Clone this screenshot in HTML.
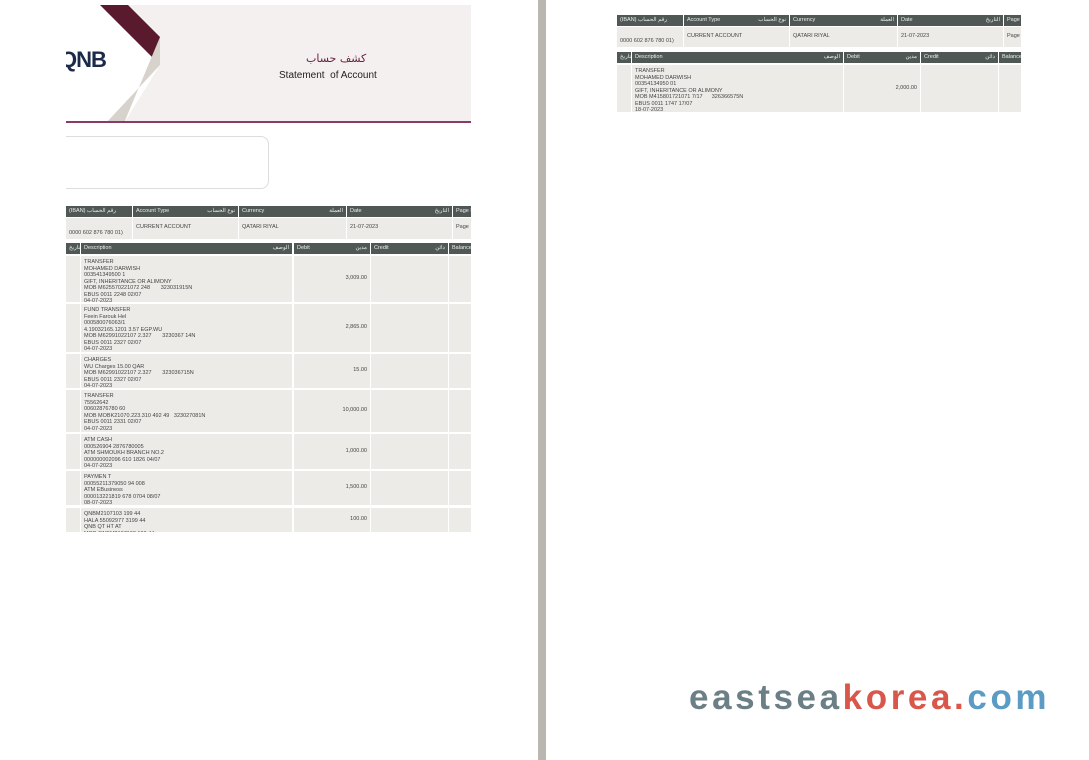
<!DOCTYPE html>
<html><head><meta charset="utf-8"><style>
*{margin:0;padding:0;box-sizing:border-box}
body{width:1089px;height:760px;background:#fff;position:relative;overflow:hidden;font-family:"Liberation Sans",sans-serif;color:#444}
.a{position:absolute}
.h{position:absolute;background:#505856;color:#eee;font-size:5.5px;padding:2px 3px;height:11px;white-space:nowrap;overflow:hidden}
.h span{float:right}
.c{position:absolute;background:#ecebe8;font-size:5.5px;padding:3px 3px;white-space:nowrap;overflow:hidden;line-height:6.5px}
.r{text-align:right}
#lp{position:absolute;left:66px;top:0;width:405px;height:533px;overflow:hidden}
</style></head><body>
<div id="lp">
<div class="a" style="left:0;top:5px;width:405px;height:117px;background:#f3f0ef"></div>
<svg class="a" style="left:0;top:5px" width="110" height="118">
<polygon points="0,0 34,0 94,60 58,118 0,118" fill="#fff"/>
<polygon points="34,0 62,0 94,32 94,60" fill="#5a1a2e"/>
<polygon points="94,60 94,32 58,118 40,118" fill="#d8d2cc"/>
</svg>
<div class="a" style="left:-6px;top:47px;font-size:22px;font-weight:bold;color:#1c2a4a;letter-spacing:-1px">QNB</div>
<div class="a" style="left:240px;top:52px;font-size:11px;color:#6a2040;font-family:'DejaVu Sans',sans-serif">كشف حساب</div>
<div class="a" style="left:213px;top:70px;font-size:10px;color:#222">Statement&nbsp; of Account</div>
<div class="a" style="left:0;top:121px;width:405px;height:2px;background:#8a3a66"></div>
<div class="a" style="left:-46px;top:136px;width:249px;height:53px;border:1px solid #ddd;border-radius:8px"></div>
</div>

<div class="h" style="left:66px;top:206px;width:66px">(IBAN) رقم الحساب</div>
<div class="h" style="left:133px;top:206px;width:105px">Account Type<span>نوع الحساب</span></div>
<div class="h" style="left:239px;top:206px;width:107px">Currency<span>العملة</span></div>
<div class="h" style="left:347px;top:206px;width:105px">Date<span>التاريخ</span></div>
<div class="h" style="left:453px;top:206px;width:18px">Page N</div>
<div class="c" style="left:66px;top:218px;width:66px;height:21px;padding-top:12px">0000 602 876 780 01)</div>
<div class="c" style="left:133px;top:218px;width:105px;height:21px;padding-top:6px">CURRENT ACCOUNT</div>
<div class="c" style="left:239px;top:218px;width:107px;height:21px;padding-top:6px">QATARI RIYAL</div>
<div class="c" style="left:347px;top:218px;width:105px;height:21px;padding-top:6px">21-07-2023</div>
<div class="c" style="left:453px;top:218px;width:18px;height:21px;padding-top:6px">Page</div>

<div class="h" style="left:66px;top:243px;width:14px">التاريخ</div>
<div class="h" style="left:81px;top:243px;width:211px">Description<span>الوصف</span></div>
<div class="h" style="left:294px;top:243px;width:76px">Debit<span>مدين</span></div>
<div class="h" style="left:371px;top:243px;width:77px">Credit<span>دائن</span></div>
<div class="h" style="left:449px;top:243px;width:22px">Balance</div>

<div id="rows"></div>
<script>
var rows=[
[256,46,"TRANSFER<br>MOHAMED DARWISH<br>003541349500 1<br>GIFT, INHERITANCE OR ALIMONY<br>MOB M625570221072 248 &nbsp;&nbsp;&nbsp;&nbsp;&nbsp; 323031915N<br>EBUS 0011 2248 02/07<br>04-07-2023","3,009.00"],
[304,48,"FUND TRANSFER<br>Feein Farouk Hel<br>000580076063/1<br>4.19032165.1201 3.57 EGP.WU<br>MOB M62991022107 2.327 &nbsp;&nbsp;&nbsp;&nbsp;&nbsp; 3230367 14N<br>EBUS 0011 2327 02/07<br>04-07-2023","2,865.00"],
[354,34,"CHARGES<br>WU Charges 15.00 QAR<br>MOB M62991022107 2.327 &nbsp;&nbsp;&nbsp;&nbsp;&nbsp; 323036715N<br>EBUS 0011 2327 02/07<br>04-07-2023","15.00"],
[390,42,"TRANSFER<br>75562642<br>00602876780 60<br>MOB MOBK21070.223.310 492 49 &nbsp; 323027081N<br>EBUS 0011 2331 02/07<br>04-07-2023","10,000.00"],
[434,35,"ATM CASH<br>000526904 2876780005<br>ATM SHMOUKH BRANCH NO.2<br>000000002096 610 1826 04/07<br>04-07-2023","1,000.00"],
[471,34,"PAYMEN T<br>00055211379050 94 008<br>ATM EBusiness<br>000013221819 678 0704 08/07<br>08-07-2023","1,500.00"],
[508,24,"QNBM2107103 199 44<br>HALA 55092977 3199 44<br>QNB QT HT AT<br>MOB QNBM2107103 199 44","100.00"]];
var h="";
rows.forEach(function(r){
h+='<div class="c" style="left:66px;top:'+r[0]+'px;width:14px;height:'+r[1]+'px"></div>';
h+='<div class="c" style="left:81px;top:'+r[0]+'px;width:211px;height:'+r[1]+'px">'+r[2]+'</div>';
h+='<div class="c r" style="left:294px;top:'+r[0]+'px;width:76px;height:'+r[1]+'px;padding-top:'+(r[1]/2-4)+'px">'+r[3]+'</div>';
h+='<div class="c" style="left:371px;top:'+r[0]+'px;width:77px;height:'+r[1]+'px"></div>';
h+='<div class="c" style="left:449px;top:'+r[0]+'px;width:22px;height:'+r[1]+'px"></div>';
});
document.getElementById('rows').innerHTML=h;
</script>

<div class="a" style="left:538px;top:0;width:8px;height:760px;background:#bab6b0"></div>

<div class="h" style="left:617px;top:15px;width:66px">(IBAN) رقم الحساب</div>
<div class="h" style="left:684px;top:15px;width:105px">Account Type<span>نوع الحساب</span></div>
<div class="h" style="left:790px;top:15px;width:107px">Currency<span>العملة</span></div>
<div class="h" style="left:898px;top:15px;width:105px">Date<span>التاريخ</span></div>
<div class="h" style="left:1004px;top:15px;width:17px">Page N</div>
<div class="c" style="left:617px;top:27px;width:66px;height:20px;padding-top:11px">0000 602 876 780 01)</div>
<div class="c" style="left:684px;top:27px;width:105px;height:20px;padding-top:6px">CURRENT ACCOUNT</div>
<div class="c" style="left:790px;top:27px;width:107px;height:20px;padding-top:6px">QATARI RIYAL</div>
<div class="c" style="left:898px;top:27px;width:105px;height:20px;padding-top:6px">21-07-2023</div>
<div class="c" style="left:1004px;top:27px;width:17px;height:20px;padding-top:6px">Page</div>

<div class="h" style="left:617px;top:52px;width:14px">التاريخ</div>
<div class="h" style="left:632px;top:52px;width:211px">Description<span>الوصف</span></div>
<div class="h" style="left:844px;top:52px;width:76px">Debit<span>مدين</span></div>
<div class="h" style="left:921px;top:52px;width:77px">Credit<span>دائن</span></div>
<div class="h" style="left:999px;top:52px;width:22px">Balance</div>
<div class="c" style="left:617px;top:65px;width:14px;height:47px"></div>
<div class="c" style="left:632px;top:65px;width:211px;height:47px">TRANSFER<br>MOHAMED DARWISH<br>00354134950 01<br>GIFT, INHERITANCE OR ALIMONY<br>MOB M415801721071 7/17 &nbsp;&nbsp;&nbsp;&nbsp; 326366575N<br>EBUS 0011 1747 17/07<br>18-07-2023</div>
<div class="c r" style="left:844px;top:65px;width:76px;height:47px;padding-top:20px">2,000.00</div>
<div class="c" style="left:921px;top:65px;width:77px;height:47px"></div>
<div class="c" style="left:999px;top:65px;width:22px;height:47px"></div>

<div class="a" style="left:689px;top:678px;font-size:35px;font-weight:bold;letter-spacing:3.6px;white-space:nowrap"><span style="color:#6b7f86">eastsea</span><span style="color:#d9574a">korea.</span><span style="color:#5b9bc4">com</span></div>
</body></html>
